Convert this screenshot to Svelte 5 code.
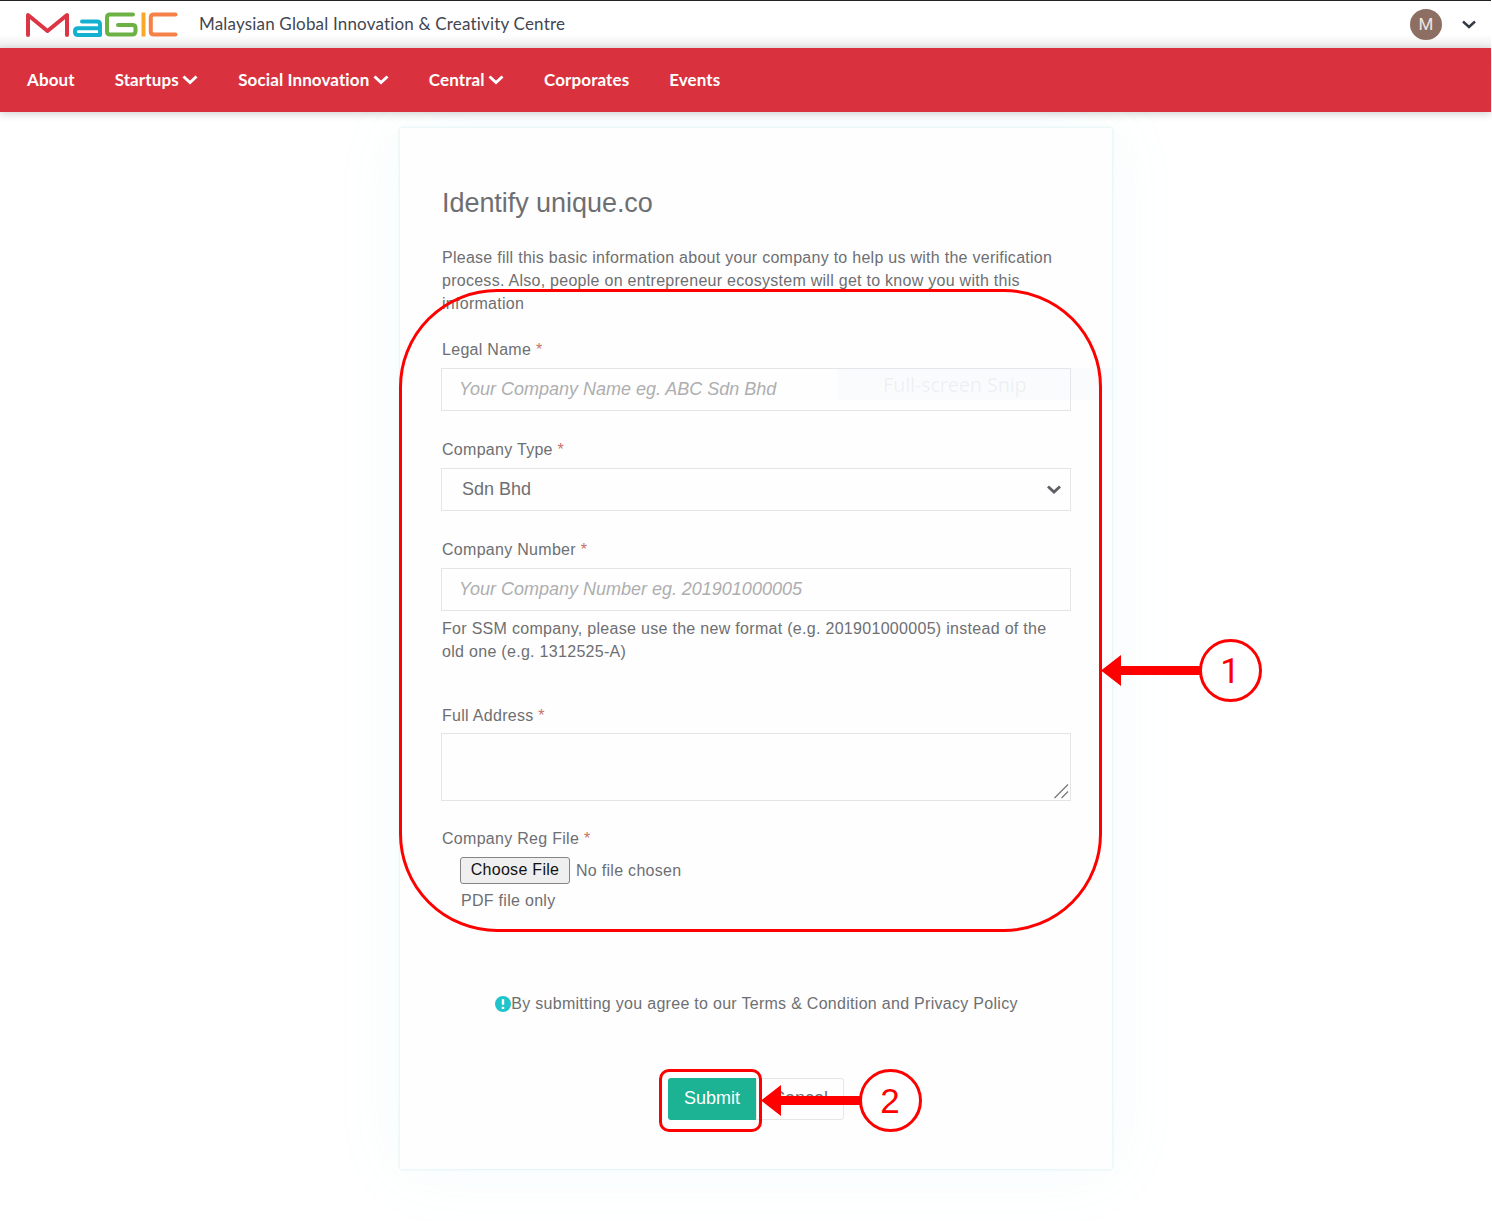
<script>
  const navItems = [
    { label: 'About', menu: false },
    { label: 'Startups', menu: true },
    { label: 'Social Innovation', menu: true },
    { label: 'Central', menu: true },
    { label: 'Corporates', menu: false },
    { label: 'Events', menu: false }
  ];
</script>

{#snippet label(text)}
  <div class="label">{text} <span class="req">*</span></div>
{/snippet}

<div class="page">
  <header class="top">
    <svg class="logo" width="154" height="26" viewBox="0 0 154 26" fill="none" stroke-width="4" stroke-linecap="round" stroke-linejoin="round">
      <path stroke="#dc3545" d="M3 23V3L22.500 19 42 3V23" />
      <path stroke="#14b0cf" d="M57 9.500H72Q75 9.500 75 12.500V23H53Q50 23 50 20V19Q50 16.300 53 16.300H74" />
      <path stroke="#6cb143" d="M108 2.500H85Q82 2.500 82 5.500V19.500Q82 22.500 85 22.500H107Q110.500 22.500 110.500 19V16Q110.500 13 107.500 13H93" />
      <path stroke="#f9a828" stroke-linecap="butt" d="M118.500 .5V24.500" />
      <path stroke="#f58148" d="M150.500 2.500H129Q125.800 2.500 125.800 5.500V19.500Q125.800 22.500 129 22.500H150.500" />
    </svg>
    <span class="tagline">Malaysian Global Innovation &amp; Creativity Centre</span>
    <span class="avatar">M</span>
    <svg class="user-chevron" width="16" height="10" viewBox="0 0 16 10" fill="none" stroke="#343a46" stroke-width="2.400"><path d="M2 1.500 8 7 14 1.500" /></svg>
  </header>
  <nav>
    {#each navItems as item}
      <span class="nav-item">
        <span>{item.label}</span>
        {#if item.menu}
          <svg width="16" height="10" viewBox="0 0 16 10" fill="none" stroke="#fff" stroke-width="3"><path d="M1.500 1.500 8 7.500 14.500 1.500" /></svg>
        {/if}
      </span>
    {/each}
  </nav>

  <main class="card">
    <h1>Identify unique.co</h1>
    <p class="intro">Please fill this basic information about your company to help us with the verification<br />process. Also, people on entrepreneur ecosystem will get to know you with this<br />information</p>

    {@render label('Legal Name')}
    <div class="field placeholder">Your Company Name eg. ABC Sdn Bhd</div>

    {@render label('Company Type')}
    <div class="field select">
      <span>Sdn Bhd</span>
      <svg width="16" height="10" viewBox="0 0 16 10" fill="none" stroke="#5d6064" stroke-width="2.800"><path d="M2 1.500 8 7 14 1.500" /></svg>
    </div>

    {@render label('Company Number')}
    <div class="field placeholder number">Your Company Number eg. 201901000005</div>
    <p class="help">For SSM company, please use the new format (e.g. 201901000005) instead of the<br />old one (e.g. 1312525-A)</p>

    {@render label('Full Address')}
    <div class="field area">
      <svg width="16" height="16" viewBox="0 0 16 16" stroke="#777" stroke-width="1.200"><path d="M1.500 14 15 .5M8.500 14 15 7.500" /></svg>
    </div>

    {@render label('Company Reg File')}
    <div class="file">
      <span class="choose">Choose File</span>
      <span class="none">No file chosen</span>
    </div>
    <div class="pdf">PDF file only</div>

    <div class="terms">
      <svg width="16" height="16" viewBox="0 0 16 16"><circle cx="8" cy="8" r="8" fill="#22c4cb" /><path d="M8 3.200V8.800M8 10.700V13" stroke="#fff" stroke-width="2.400" /></svg>
      <span>By submitting you agree to our Terms &amp; Condition and Privacy Policy</span>
    </div>
    <div class="actions">
      <span class="submit">Submit</span>
      <span class="cancel">Cancel</span>
    </div>
  </main>

  <div class="snip">Full-screen Snip</div>
  <div class="outline form-outline"></div>
  <div class="outline submit-outline"></div>
  <svg class="callouts" width="1492" height="1221" viewBox="0 0 1492 1221">
    <g fill="#f00">
      <path d="M1101 670.500 1121 655V666H1201V675H1121V686Z" />
      <path d="M761 1100.500 781 1085V1096H861V1105H781V1116Z" />
    </g>
    <g fill="#fff" stroke="#f00" stroke-width="3">
      <circle cx="1230.500" cy="670.500" r="30" />
      <circle cx="890.500" cy="1100.500" r="30" />
    </g>
    <g class="numbers" fill="#f00">
      <text class="one" x="1230" y="683">1</text>
      <text x="890" y="1113">2</text>
    </g>
  </svg>
</div>

<style>
  :global(body) { background: #fff; }
  .page {
    position: relative;
    width: 1492px;
    height: 1221px;
    overflow: hidden;
    background: #fff;
    font-family: 'Liberation Sans', Arial, sans-serif;
    color: #6e6f72;
    box-sizing: border-box;
  }
  .page * { box-sizing: border-box; }
  .top {
    display: flex;
    align-items: center;
    width: 1491px;
    height: 48px;
    padding: 0 14px 0 25px;
    border-top: 1.500px solid #222;
    background: linear-gradient(#fff 34px, #ebebeb);
  }
  .tagline {
    margin-left: 20px;
    padding-bottom: 2px;
    font: 17px/24px Lato, sans-serif;
    letter-spacing: 0.18px;
    color: #434651;
    white-space: nowrap;
  }
  .avatar {
    width: 32px;
    height: 31px;
    margin-left: auto;
    border-radius: 50%;
    background: #8d6e63;
    color: #eee5e1;
    font: 17px/31px Roboto, sans-serif;
    text-align: center;
  }
  .user-chevron { margin-left: 19px; }
  nav {
    position: relative;
    display: flex;
    align-items: center;
    gap: 40px;
    width: 1491px;
    height: 64px;
    padding-left: 27px;
    background: #d9323e;
    box-shadow: 0 2px 8px rgb(0 0 0 / 18%);
    color: #fff;
    font: bold 17px/24px Lato, sans-serif;
    letter-spacing: 0.1px;
  }
  .nav-item { display: flex; align-items: center; gap: 3.500px; white-space: nowrap; }
  .card {
    width: 712px;
    height: 1041px;
    margin: 16px 0 0 400px;
    padding: 58px 41px 0 42px;
    background: #fefefe;
    box-shadow: 0 0 3px rgb(110 195 205 / 28%), 0 0 65px rgb(110 215 215 / 8%);
    font-size: 16px;
    line-height: 23px;
    letter-spacing: 0.29px;
    white-space: nowrap;
  }
  h1 {
    margin: 0 0 26px;
    font-size: 27px;
    font-weight: 400;
    line-height: 34px;
    letter-spacing: -0.050px;
  }
  p { margin: 0; }
  .intro { margin-bottom: 22.400px; line-height: 23.200px; letter-spacing: 0.27px; }
  .label { margin-bottom: 7px; }
  .req { color: #c8706c; }
  .field {
    height: 43px;
    margin: 0 0 27px -1px;
    padding: 0 17px;
    border: 1.500px solid #e4e5e6;
    line-height: 40px;
    font-size: 18px;
    letter-spacing: -0.010px;
  }
  .placeholder { color: #aeaeb0; font-style: italic; }
  .select {
    display: flex;
    align-items: center;
    justify-content: space-between;
    padding: 0 8px 0 20px;
  }
  .select span { line-height: 38px; padding-bottom: 2px; }
  .number { margin-bottom: 6px; }
  .help { margin-bottom: 41px; letter-spacing: 0.3px; }
  .area {
    display: flex;
    align-items: flex-end;
    justify-content: flex-end;
    height: 68px;
    margin-top: -1px;
    margin-bottom: 26px;
    padding: 0 1px 0 0;
  }
  .file { display: flex; align-items: center; gap: 6px; margin-left: 18px; }
  .choose {
    width: 110px;
    height: 27px;
    border: 1.500px solid #858585;
    border-radius: 3px;
    background: #efefef;
    color: #111;
    line-height: 24px;
    text-align: center;
  }
  .none { margin-top: -1px; }
  .pdf { margin: 5px 0 80px 19px; }
  .terms { display: flex; align-items: center; justify-content: center; }
  .actions {
    display: flex;
    justify-content: center;
    margin: 63px 2px 0 0;
    font-size: 18px;
    line-height: 40px;
    letter-spacing: 0;
    text-align: center;
  }
  .submit {
    width: 88px;
    height: 42px;
    padding-left: 1px;
    border-radius: 3px 0 0 3px;
    background: #1cb394;
    color: #fff;
  }
  .cancel {
    width: 88px;
    height: 42px;
    padding-left: 1px;
    border: 1px solid #e5e6e7;
    border-radius: 0 3px 3px 0;
    line-height: 38px;
  }
  .snip {
    position: absolute;
    left: 838px;
    top: 368px;
    width: 274px;
    height: 32px;
    padding-left: 45px;
    background: rgb(225 232 250 / 14%);
    color: rgb(160 160 170 / 13%);
    font: 20px/33px 'Open Sans', sans-serif;
    letter-spacing: -0.2px;
  }
  .outline { position: absolute; border: 3px solid #f00; }
  .form-outline { left: 399px; top: 289px; width: 703px; height: 643px; border-radius: 98px; }
  .submit-outline { left: 659px; top: 1069px; width: 103px; height: 63px; border-radius: 10px; }
  .callouts { position: absolute; left: 0; top: 0; }
  .numbers { font-size: 35px; text-anchor: middle; }
  .one { font-family: Roboto, sans-serif; }
</style>
